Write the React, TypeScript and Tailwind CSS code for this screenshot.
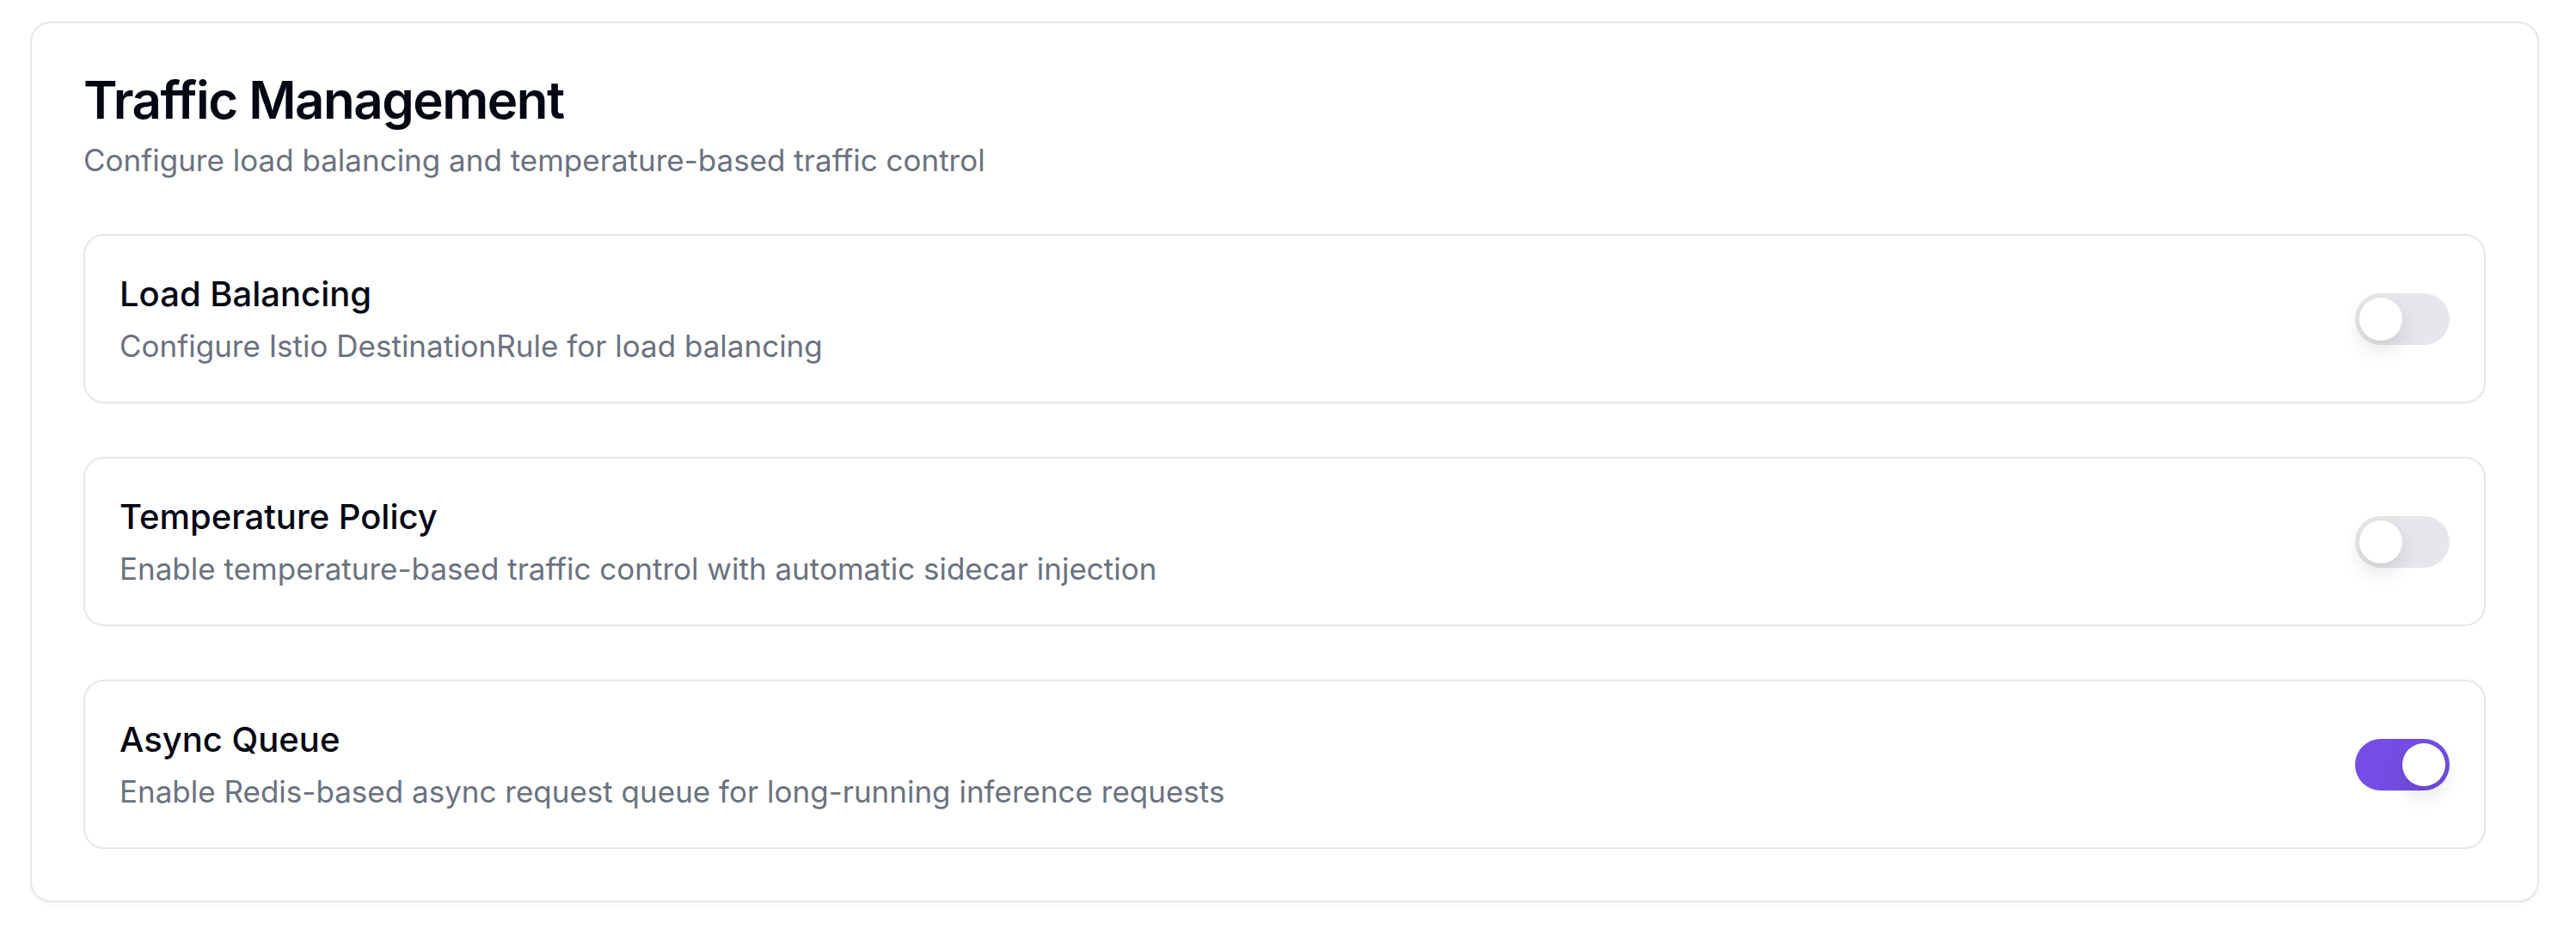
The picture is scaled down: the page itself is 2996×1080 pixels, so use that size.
import React, { useState } from 'react';

type Setting = {
    id: string;
    title: string;
    description: string;
    enabled: boolean;
};

function Toggle({ checked, onChange }: { checked: boolean; onChange: () => void }) {
    return (
        <button
            type="button"
            role="switch"
            aria-checked={checked}
            onClick={onChange}
            className={
                checked
                    ? 'relative flex h-[60px] w-[110px] shrink-0 items-center rounded-full bg-[#744ee4] p-[5px] transition-colors'
                    : 'relative flex h-[60px] w-[110px] shrink-0 items-center rounded-full bg-[#e5e7eb] p-[5px] transition-colors'
            }
        >
            <span
                className={
                    checked
                        ? 'h-[50px] w-[50px] translate-x-[50px] rounded-full bg-white shadow-[0_10px_24px_rgba(0,0,0,0.12)] transition-transform'
                        : 'h-[50px] w-[50px] translate-x-0 rounded-full bg-white shadow-[0_10px_24px_rgba(0,0,0,0.12)] transition-transform'
                }
            />
        </button>
    );
}

export default function App() {
    const [settings, setSettings] = useState<Setting[]>([
        {
            id: 'lb',
            title: 'Load Balancing',
            description: 'Configure Istio DestinationRule for load balancing',
            enabled: false,
        },
        {
            id: 'temp',
            title: 'Temperature Policy',
            description: 'Enable temperature-based traffic control with automatic sidecar injection',
            enabled: false,
        },
        {
            id: 'queue',
            title: 'Async Queue',
            description: 'Enable Redis-based async request queue for long-running inference requests',
            enabled: true,
        },
    ]);

    const toggle = (id: string) => {
        setSettings(prev => prev.map(s => (s.id === id ? { ...s, enabled: !s.enabled } : s)));
    };

    return (
        <div className="min-h-screen bg-white pl-[35px] pr-[43px] pt-[25px] font-['Inter',sans-serif]">
            <div className="rounded-[24px] border-2 border-[#e5e7eb] bg-white px-[60px] pb-[60px] pt-[53px] shadow-[0_2px_4px_rgba(0,0,0,0.04)]">
                <div className="flex flex-col gap-[10px]">
                    <h1 className="text-[60px] font-semibold leading-[72px] tracking-[-1.5px] text-[#030712]">Traffic Management</h1>
                    <p className="text-[35px] leading-[48px] text-[#6b7280]">
                        Configure load balancing and temperature-based traffic control
                    </p>
                </div>

                <div className="mt-[62px] flex flex-col gap-[62px]">
                    {settings.map(setting => (
                        <div
                            key={setting.id}
                            className="flex items-center justify-between rounded-[24px] border-2 border-[#e5e7eb] bg-white p-[40px]"
                        >
                            <div className="flex flex-col gap-[8px]">
                                <h3 className="text-[40px] font-medium leading-[56px] text-[#030712]">{setting.title}</h3>
                                <p className="text-[35px] leading-[49px] text-[#6b7280]">{setting.description}</p>
                            </div>
                            <Toggle checked={setting.enabled} onChange={() => toggle(setting.id)} />
                        </div>
                    ))}
                </div>
            </div>
        </div>
    );
}
